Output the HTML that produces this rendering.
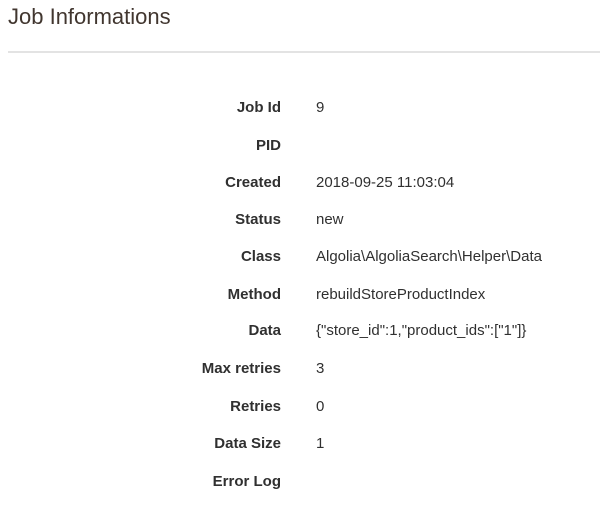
<!DOCTYPE html>
<html><head><style>
body{margin:0;width:600px;height:508px;background:#fff;font-family:"Liberation Sans",sans-serif;color:#303030;overflow:hidden;position:relative}
h1{position:absolute;left:8px;top:4px;margin:0;font-weight:normal;font-size:22px;color:#41362f}
.hr{position:absolute;left:8px;right:0;top:51px;height:2px;background:#e3e3e3}
.row{position:absolute;left:0;width:600px;height:20px;font-size:15px;line-height:20px}
.l{position:absolute;right:319px;font-weight:bold;text-align:right}
.v{position:absolute;left:316px}
</style></head><body>
<h1>Job Informations</h1>
<div class="hr"></div>
<div class="row" style="top:98px"><span class="l">Job Id</span><span class="v">9</span></div>
<div class="row" style="top:136px"><span class="l">PID</span><span class="v"></span></div>
<div class="row" style="top:173px"><span class="l">Created</span><span class="v">2018-09-25 11:03:04</span></div>
<div class="row" style="top:210px"><span class="l">Status</span><span class="v">new</span></div>
<div class="row" style="top:247px"><span class="l">Class</span><span class="v">Algolia\AlgoliaSearch\Helper\Data</span></div>
<div class="row" style="top:285px"><span class="l">Method</span><span class="v">rebuildStoreProductIndex</span></div>
<div class="row" style="top:321px"><span class="l">Data</span><span class="v">{"store_id":1,"product_ids":["1"]}</span></div>
<div class="row" style="top:359px"><span class="l">Max retries</span><span class="v">3</span></div>
<div class="row" style="top:397px"><span class="l">Retries</span><span class="v">0</span></div>
<div class="row" style="top:434px"><span class="l">Data Size</span><span class="v">1</span></div>
<div class="row" style="top:472px"><span class="l">Error Log</span><span class="v"></span></div>
</body></html>
